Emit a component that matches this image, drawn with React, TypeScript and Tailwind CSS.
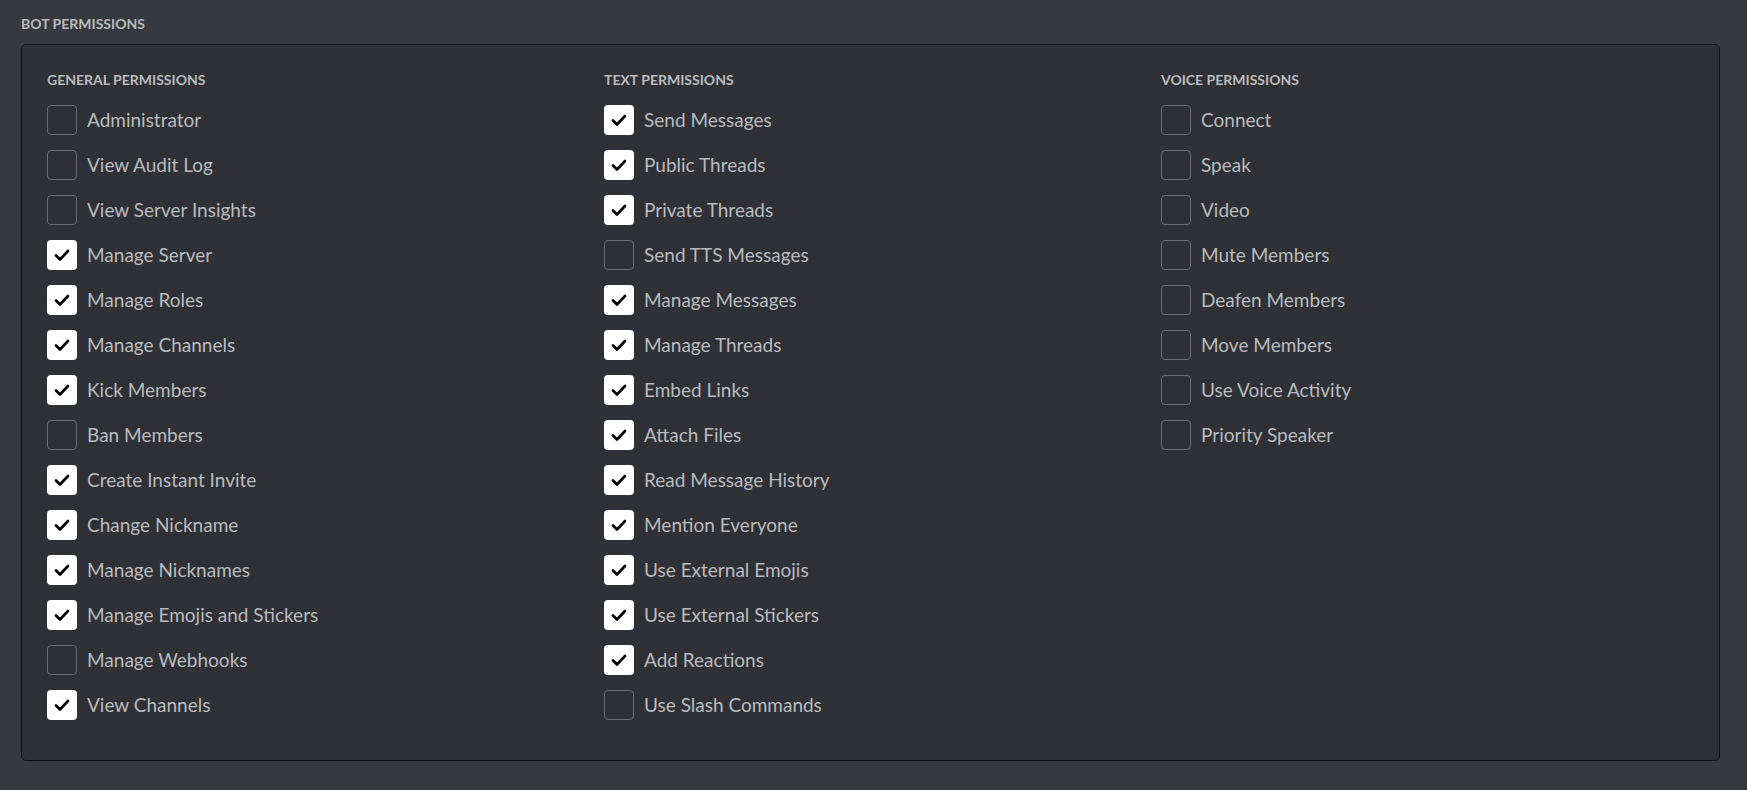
import { useState } from 'react'

type Perm = { name: string; on: boolean }

const general: Perm[] = [
  { name: 'Administrator', on: false },
  { name: 'View Audit Log', on: false },
  { name: 'View Server Insights', on: false },
  { name: 'Manage Server', on: true },
  { name: 'Manage Roles', on: true },
  { name: 'Manage Channels', on: true },
  { name: 'Kick Members', on: true },
  { name: 'Ban Members', on: false },
  { name: 'Create Instant Invite', on: true },
  { name: 'Change Nickname', on: true },
  { name: 'Manage Nicknames', on: true },
  { name: 'Manage Emojis and Stickers', on: true },
  { name: 'Manage Webhooks', on: false },
  { name: 'View Channels', on: true },
]

const text: Perm[] = [
  { name: 'Send Messages', on: true },
  { name: 'Public Threads', on: true },
  { name: 'Private Threads', on: true },
  { name: 'Send TTS Messages', on: false },
  { name: 'Manage Messages', on: true },
  { name: 'Manage Threads', on: true },
  { name: 'Embed Links', on: true },
  { name: 'Attach Files', on: true },
  { name: 'Read Message History', on: true },
  { name: 'Mention Everyone', on: true },
  { name: 'Use External Emojis', on: true },
  { name: 'Use External Stickers', on: true },
  { name: 'Add Reactions', on: true },
  { name: 'Use Slash Commands', on: false },
]

const voice: Perm[] = [
  { name: 'Connect', on: false },
  { name: 'Speak', on: false },
  { name: 'Video', on: false },
  { name: 'Mute Members', on: false },
  { name: 'Deafen Members', on: false },
  { name: 'Move Members', on: false },
  { name: 'Use Voice Activity', on: false },
  { name: 'Priority Speaker', on: false },
]

function Checkbox({ checked }: { checked: boolean }) {
  if (checked) {
    return (
      <div className="w-[30px] h-[30px] rounded-[4px] bg-white flex items-center justify-center shrink-0">
        <svg width="18" height="18" viewBox="0 0 18 18" fill="none">
          <path d="M3 9.5 L7 13.5 L15 5" stroke="#000" strokeWidth="2.7" strokeLinecap="round" strokeLinejoin="round" />
        </svg>
      </div>
    )
  }
  return <div className="w-[30px] h-[30px] rounded-[4px] border border-[#6a6d73] shrink-0"></div>
}

function Column({ title, perms }: { title: string; perms: Perm[] }) {
  const [state, setState] = useState(perms.map(p => p.on))

  return (
    <div className="flex flex-col">
      <div className="h-[20px] leading-[20px] text-[14px] font-bold uppercase text-[#b9bbbe] mb-[15px]">
        {title}
      </div>
      {perms.map((p, i) => (
        <label
          key={p.name}
          className="flex items-center h-[30px] mb-[15px] cursor-pointer"
          onClick={() => setState(s => s.map((v, j) => (j === i ? !v : v)))}
        >
          <Checkbox checked={state[i]} />
          <span className="ml-[10px] text-[19px] text-[#b9bbbe]">{p.name}</span>
        </label>
      ))}
    </div>
  )
}

export default function App() {
  return (
    <div className="min-h-[790px] w-full bg-[#36393f] pt-[14px] font-['Lato','Noto_Sans',sans-serif]">
      <div className="ml-[21px] h-[20px] leading-[20px] text-[14px] font-bold uppercase text-[#b9bbbe]">
        Bot Permissions
      </div>

      <div className="ml-[21px] mt-[10px] w-[1699px] rounded-[5px] border border-[#111214] bg-[#2f3136] pt-[25px] pb-[25px] pl-[25px]">
        <div className="grid grid-cols-[557px_557px_557px]">
          <Column title="General Permissions" perms={general} />
          <Column title="Text Permissions" perms={text} />
          <Column title="Voice Permissions" perms={voice} />
        </div>
      </div>
    </div>
  )
}
